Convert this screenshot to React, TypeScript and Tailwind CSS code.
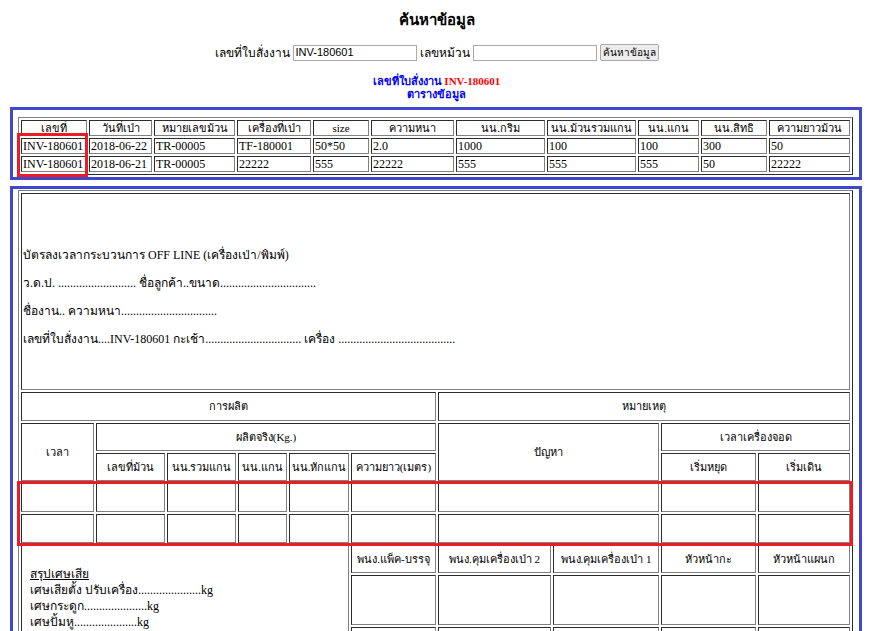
import React from "react";

const cell = "border border-[#808080] [border-style:inset] p-0 px-[1px] font-normal";
const tbl = "table-fixed border-separate border-spacing-[2px] border border-[#808080] [border-style:outset] w-[835px]";

const invHeaders = [
  "เลขที่",
  "วันที่เป่า",
  "หมายเลขม้วน",
  "เครื่องที่เป่า",
  "size",
  "ความหนา",
  "นน.กริม",
  "นน.ม้วนรวมแกน",
  "นน.แกน",
  "นน.สิทธิ",
  "ความยาวม้วน",
];
const invWidths = ["w-[66px]", "w-[63px]", "w-[81px]", "w-[74px]", "w-[56px]", "w-[83px]", "w-[89px]", "w-[89px]", "w-[61px]", "w-[66px]", "w-[81px]"];

const invRows = [
  ["INV-180601", "2018-06-22", "TR-00005", "TF-180001", "50*50", "2.0", "1000", "100", "100", "300", "50"],
  ["INV-180601", "2018-06-21", "TR-00005", "22222", "555", "22222", "555", "555", "555", "50", "22222"],
];

const prodWidths = ["w-[73px]", "w-[69px]", "w-[69px]", "w-[49px]", "w-[60px]", "w-[85px]", "w-[113px]", "w-[106px]", "w-[95px]", "w-[92px]"];

const head = cell + " text-center whitespace-nowrap overflow-hidden text-[11px]";

function EmptyRow() {
  return (
    <tr>
      {prodWidths.slice(0, 6).map((_, i) => (
        <td key={i} className={cell + " h-[29px]"} />
      ))}
      <td colSpan={2} className={cell + " h-[29px]"} />
      <td className={cell + " h-[29px]"} />
      <td className={cell + " h-[29px]"} />
    </tr>
  );
}

export default function App() {
  return (
    <div className="min-h-screen bg-white text-black font-['Liberation_Serif',serif] text-[12px]">
      {/* ค้นหา */}
      <div className="pt-[10px] text-center">
        <h3 className="text-[15px] font-bold leading-[20px]">ค้นหาข้อมูล</h3>
        <form
          className="mt-[14px] flex h-[17px] items-center justify-center text-[12px] font-['Liberation_Sans',sans-serif]"
          onSubmit={(e) => e.preventDefault()}
        >
          <span>เลขที่ใบสั่งงาน</span>
          <input
            defaultValue="INV-180601"
            className="ml-[3px] h-[16px] w-[124px] border border-[#a9a9a9] px-[2px] text-[11px] outline-none"
          />
          <span className="ml-[3px]">เลขหม้วน</span>
          <input className="ml-[3px] h-[16px] w-[124px] border border-[#a9a9a9] px-[2px] text-[11px] outline-none" />
          <button className="ml-[3px] h-[17px] w-[59px] rounded-[2px] border border-[#a9a9a9] bg-[#ececec] text-[10px] leading-[14px]">
            ค้นหาข้อมูล
          </button>
        </form>
        <div className="mt-[14px] text-[11px] font-bold leading-[13px] text-[#0000ff]">
          <div>
            เลขที่ใบสั่งงาน <span className="text-[#ff0000]">INV-180601</span>
          </div>
          <div>ตารางข้อมูล</div>
        </div>
      </div>

      {/* ตารางข้อมูล */}
      <div className="relative ml-[10px] mt-[6px] w-[852px] border-[3px] border-[#3f48cc] pl-[5px] pt-[7px] pb-[2px]">
        <table className={tbl}>
          <colgroup>
            {invWidths.map((w, i) => (
              <col key={i} className={w} />
            ))}
          </colgroup>
          <thead>
            <tr>
              {invHeaders.map((h) => (
                <td key={h} className={head + " h-[16px] leading-[14px]"}>
                  {h}
                </td>
              ))}
            </tr>
          </thead>
          <tbody>
            {invRows.map((r, i) => (
              <tr key={i}>
                {r.map((v, j) => (
                  <td key={j} className={cell + " h-[16px] whitespace-nowrap overflow-hidden leading-[14px]"}>
                    {v}
                  </td>
                ))}
              </tr>
            ))}
          </tbody>
        </table>
        <div className="pointer-events-none absolute left-[4px] top-[23px] h-[44px] w-[71px] border-[3px] border-[#ed1c24]" />
      </div>

      {/* บัตรลงเวลา */}
      <div className="relative ml-[10px] mt-[6px] w-[852px] border-[3px] border-b-0 border-[#3f48cc] pl-[5px] pt-[1px]">
        <table className={tbl}>
          <colgroup>
            {prodWidths.map((w, i) => (
              <col key={i} className={w} />
            ))}
          </colgroup>
          <tbody>
            <tr>
              <td colSpan={10} className={cell + " align-top"}>
                <div className="h-[195px] pt-[47px] leading-[28px] whitespace-nowrap">
                  <div>บัตรลงเวลากระบวนการ OFF LINE (เครื่องเป่า/พิมพ์)</div>
                  <div>ว.ด.ป. .......................... ชื่อลูกค้า..ขนาด................................</div>
                  <div>ชื่องาน.. ความหนา................................</div>
                  <div>เลขที่ใบสั่งงาน....INV-180601 กะเช้า................................ เครื่อง .......................................</div>
                </div>
              </td>
            </tr>
            <tr>
              <td colSpan={6} className={head + " h-[29px]"}>
                การผลิต
              </td>
              <td colSpan={4} className={head + " h-[29px]"}>
                หมายเหตุ
              </td>
            </tr>
            <tr>
              <td rowSpan={2} className={head}>
                เวลา
              </td>
              <td colSpan={5} className={head + " h-[28px]"}>
                ผลิตจริง(Kg.)
              </td>
              <td rowSpan={2} colSpan={2} className={head}>
                ปัญหา
              </td>
              <td colSpan={2} className={head + " h-[28px]"}>
                เวลาเครื่องจอด
              </td>
            </tr>
            <tr>
              <td className={head + " h-[28px]"}>เลขที่ม้วน</td>
              <td className={head + " h-[28px]"}>นน.รวมแกน</td>
              <td className={head + " h-[28px]"}>นน.แกน</td>
              <td className={head + " h-[28px]"}>นน.หักแกน</td>
              <td className={head + " h-[28px]"}>ความยาว(เมตร)</td>
              <td className={head + " h-[28px]"}>เริ่มหยุด</td>
              <td className={head + " h-[28px]"}>เริ่มเดิน</td>
            </tr>
            <EmptyRow />
            <EmptyRow />
            <tr>
              <td rowSpan={3} colSpan={5} className={cell + " align-top"}>
                <div className="pl-[7px] pt-[20px] leading-[16px]">
                  <div>
                    <u>สรุปเศษเสีย</u>
                  </div>
                  <div>เศษเสียตั้ง ปรับเครื่อง.....................kg</div>
                  <div>เศษกระดูก.....................kg</div>
                  <div>เศษปั้มหู.....................kg</div>
                </div>
              </td>
              <td className={head + " h-[28px]"}>พนง.แพ็ค-บรรจุ</td>
              <td className={head + " h-[28px]"}>พนง.คุมเครื่องเป่า 2</td>
              <td className={head + " h-[28px]"}>พนง.คุมเครื่องเป่า 1</td>
              <td className={head + " h-[28px]"}>หัวหน้ากะ</td>
              <td className={head + " h-[28px]"}>หัวหน้าแผนก</td>
            </tr>
            <tr>
              <td className={cell + " h-[50px]"} />
              <td className={cell + " h-[50px]"} />
              <td className={cell + " h-[50px]"} />
              <td className={cell + " h-[50px]"} />
              <td className={cell + " h-[50px]"} />
            </tr>
            <tr>
              <td className={cell + " h-[50px]"} />
              <td className={cell + " h-[50px]"} />
              <td className={cell + " h-[50px]"} />
              <td className={cell + " h-[50px]"} />
              <td className={cell + " h-[50px]"} />
            </tr>
          </tbody>
        </table>
        <div className="pointer-events-none absolute left-[4px] top-[292px] h-[65px] w-[836px] border-[3px] border-[#ed1c24]" />
      </div>
    </div>
  );
}
